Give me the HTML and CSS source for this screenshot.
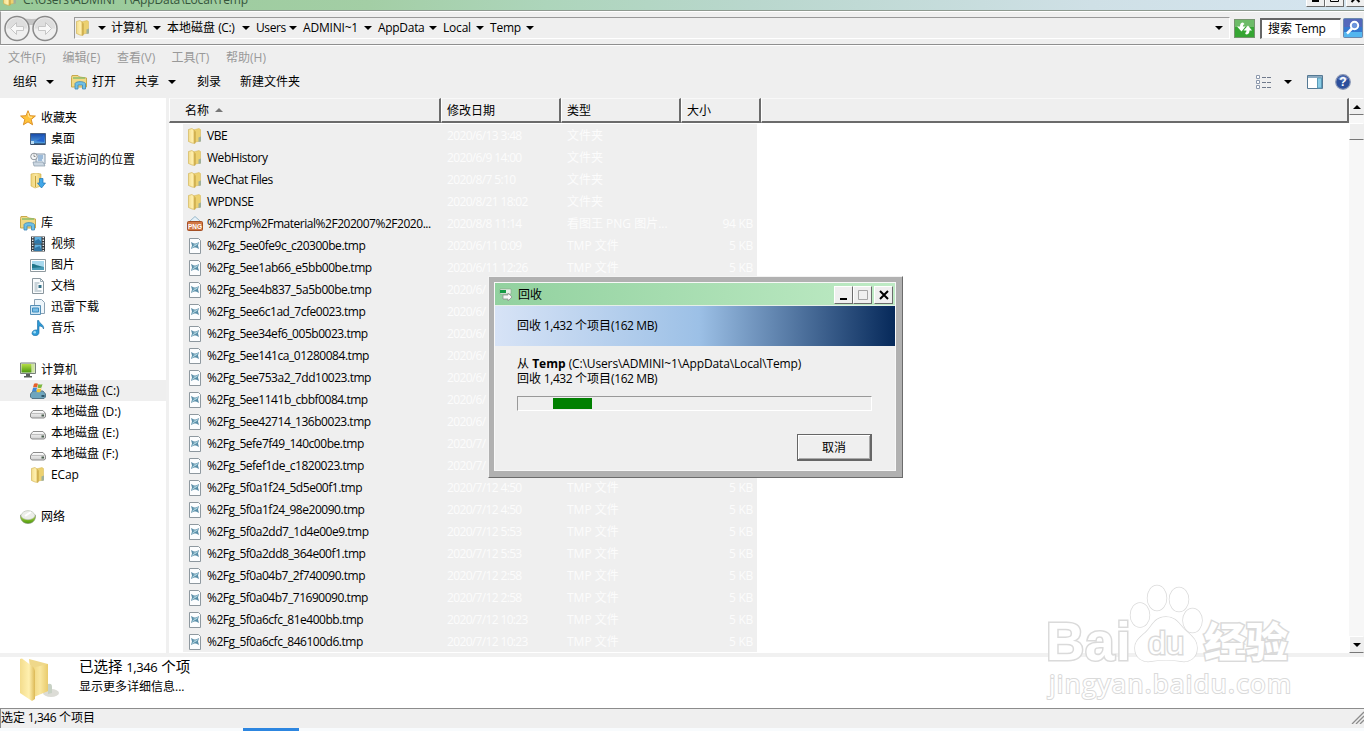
FILE: index.html
```html
<!DOCTYPE html>
<html lang="zh-CN">
<head>
    <meta charset="UTF-8">
    <title>C:\Users\ADMINI~1\AppData\Local\Temp</title>
    <link rel="stylesheet" href="styles.css">
</head>
<body>

<!-- shared icons -->
<svg class="defs" width="0" height="0">
    <defs>
        <linearGradient id="gold"><stop offset="0" stop-color="#f3dc8c"/><stop offset=".6" stop-color="#fff0b0"/><stop offset="1" stop-color="#dcb956"/></linearGradient>
        <linearGradient id="cream"><stop offset="0" stop-color="#f0d57c"/><stop offset=".5" stop-color="#f9e7a0"/><stop offset="1" stop-color="#e9cb6c"/></linearGradient>
        <linearGradient id="blue" x2="0" y2="1"><stop offset="0" stop-color="#1647a6"/><stop offset="1" stop-color="#58a9e8"/></linearGradient>
        <linearGradient id="silver" x2="0" y2="1"><stop offset="0" stop-color="#fff"/><stop offset="1" stop-color="#cfcfcf"/></linearGradient>
        <linearGradient id="green" x2="0" y2="1"><stop offset="0" stop-color="#b6dd45"/><stop offset="1" stop-color="#4c9a0c"/></linearGradient>
    </defs>
    <symbol id="folder" viewBox="0 0 16 16">
        <path d="M6 2l6-1.500 1.500 1V13L6 14.500z" fill="#ecd170" stroke="#d5b552" stroke-width=".5"/>
        <path d="M1.500 1.500L5 .5l3 2.500v12.500L5 15l-3.500-1.500z" fill="url(#gold)" stroke="#cfae4c" stroke-width=".6"/>
        <path d="M8 3.500v11.500" stroke="#bd9a39" stroke-width=".7"/>
        <path d="M11.500 9.500l2.500-1v5l-2.500.5z" fill="#9fb09a"/>
    </symbol>
    <symbol id="library" viewBox="0 0 16 16">
        <path d="M.5 3.500V13h15V4l-7-1L7 1.500H1z" fill="#f2d984" stroke="#c9a94c"/>
        <path d="M2 4h12" stroke="#8cbc6c" stroke-width="1.500"/>
        <path d="M4 15V9.500C5 7 13 7 14.500 9.500V15h-3v-4H7v4z" fill="#6fc0e6" stroke="#3f87b4" stroke-width=".8"/>
    </symbol>
    <symbol id="star" viewBox="0 0 16 16">
        <path d="M8 .7l2 5 5.400.3-4.200 3.500 1.400 5.300L8 11.900l-4.600 2.900 1.400-5.300L.6 6 6 5.700z" fill="#ffc33c" stroke="#d98a1e" stroke-width=".9"/>
        <path d="M8 3l1 4 3 .3" fill="none" stroke="#ffe9a0"/>
    </symbol>
    <symbol id="desktop" viewBox="0 0 16 16">
        <path d="M.5 2.500h15v11H.5z" fill="url(#blue)" stroke="#4a6080"/>
        <path d="M6 10c3-1 5-3 8-6v7z" fill="#2465cf"/>
        <path d="M1 13h14" stroke="#2b3c56" stroke-width="1.200"/>
        <path d="M1 10h3v3H1z" fill="#b9dcf4"/>
    </symbol>
    <symbol id="recent" viewBox="0 0 16 16">
        <path d="M6 2h9v10H6z" fill="#e3edf6" stroke="#8898a8"/>
        <path d="M3 10h10l2 4H4z" fill="#cbd7e2" stroke="#8898a8" stroke-width=".7"/>
        <path d="M8 4h5M8 6h5M8 8h4" stroke="#5689bd"/>
        <circle cx="4" cy="4.500" r="3.300" fill="#f5f7f8" stroke="#8f969c"/>
        <path d="M4 2.500v2h1.500" fill="none" stroke="#666" stroke-width=".7"/>
    </symbol>
    <symbol id="download" viewBox="0 0 16 16">
        <path d="M1 1l5-1 5 1v12l-6 2-4-2z" fill="url(#cream)" stroke="#cfac45" stroke-width=".6"/>
        <path d="M5.500 3v11" stroke="#c5a33d"/>
        <path d="M9.500 5.500h3.500V10h2.500l-4 5-4-5h2z" fill="#42a7e8" stroke="#1c75b5" stroke-width=".7"/>
    </symbol>
    <symbol id="video" viewBox="0 0 16 16">
        <path d="M1 .5h14v15H1z" fill="#33383d"/>
        <path d="M4.500 1h7v6.500h-7zM4.500 8.500h7V15h-7z" fill="#5fb0e0"/>
        <path d="M4.500 5l4-2 3 3v1.500h-7zM4.500 12l5-2 2 4v1h-7z" fill="#2f77a8"/>
        <path d="M2.700 1v14M13.300 1v14" stroke="#edf0f2" stroke-width="1.500" stroke-dasharray="1.300 1.300"/>
    </symbol>
    <symbol id="picture" viewBox="0 0 16 16">
        <path d="M.5 2.500h15v12H.5z" fill="#fff" stroke="#909a9f"/>
        <path d="M2 4h12v9H2z" fill="#a8d9ee"/>
        <path d="M2 7c4 0 5 2 12 3v3H2z" fill="#20768a"/>
        <path d="M2 11l12-1v3H2z" fill="#4b9db9"/>
    </symbol>
    <symbol id="document" viewBox="0 0 16 16">
        <path d="M2.500.5h8l3 3v12h-11z" fill="#fafcfd" stroke="#8b979e"/>
        <path d="M10.500.5v3h3M4.500 5h5M4.500 7h3M4.500 9h3M4.500 11h3M4.500 13h7" fill="none" stroke="#97aab5"/>
        <path d="M8.500 7h3v3h-3z" fill="#347086"/>
    </symbol>
    <symbol id="thunder" viewBox="0 0 16 16">
        <path d="M4.500.5h7l3 3v11h-10z" fill="#eef6fb" stroke="#8ba2b4"/>
        <path d="M.5 6.500h10v9H.5z" fill="#cfe7f5" stroke="#568fb6"/>
        <path d="M2.500 9h6v4h-6z" fill="#79bde6" stroke="#3e8dbf"/>
    </symbol>
    <symbol id="music" viewBox="0 0 16 16">
        <path d="M7.500.5h1.300c.6 3.500 5.700 4 4.700 8.500-.5-2-2-3-4.500-3v6.500c0 4-7 4.200-7 .8C2 10.500 5 9.500 7.500 10z" fill="#2c9ad6" stroke="#1769a2" stroke-width=".6"/>
        <circle cx="4.700" cy="12.300" r="1.300" fill="#9edbf5"/>
    </symbol>
    <symbol id="computer" viewBox="0 0 16 16">
        <path d="M.5 1h15v10.500H.5z" fill="#e2e8dd" stroke="#78817a"/>
        <path d="M1.500 2h10v8.500h-10z" fill="url(#green)"/>
        <path d="M12 2h2.500v8.500H12z" fill="#cce59c"/>
        <path d="M6 12h4v2h2v1.500H4V14h2z" fill="#59605a"/>
    </symbol>
    <symbol id="drive" viewBox="0 0 16 16">
        <path d="M.5 9.500L3 6.500h10l2.500 3V13l-1.500 1H2L.5 13z" fill="url(#silver)" stroke="#8c8c8c"/>
        <path d="M1 9.500h14" stroke="#aaa" stroke-width=".7"/>
        <path d="M11.500 10.500h2.500v2h-2.500z" fill="#4b5f4e"/>
    </symbol>
    <symbol id="sysdrive" viewBox="0 0 16 16">
        <path d="M.5 11L3 8h10l2.500 3v3l-1.500 1.500H2L.5 14z" fill="#6ea5bd" stroke="#577789"/>
        <path d="M11.500 12h3v2h-3z" fill="#30576b"/>
        <path d="M4 .7q2-1 4 0L7 4.500q-2-1-4 0z" fill="#e4602a"/>
        <path d="M8.500 1q2 1 4 0l-1 3.500q-2 1-4 0z" fill="#7cb840"/>
        <path d="M3 5q2-1 4 0L6 8.500q-2-1-4 0z" fill="#3f88d8"/>
        <path d="M7.500 5.300q2 1 4 0l-1 3.500q-2 1-4 0z" fill="#f3c431"/>
    </symbol>
    <symbol id="network" viewBox="0 0 16 16">
        <path d="M.5 6C2 9 14 9 15.500 6c.5 5-3 8.500-7.500 8.500S0 11 .5 6z" fill="url(#green)" stroke="#819173" stroke-width=".7"/>
        <path d="M1 6.500C3 0 13 0 15 6.500 14 12 2 12 1 6.500z" fill="#eceee9" stroke="#b9c2b3" stroke-width=".7"/>
        <path d="M5 7l6-4" stroke="#fff" stroke-width="2"/>
    </symbol>
    <symbol id="png" viewBox="0 0 16 16">
        <path d="M3 5L8 .5l5 4.500v3H3z" fill="#e5f1f8" stroke="#9ab8ca"/>
        <rect x=".5" y="5.500" width="15" height="9" rx="1" fill="#d17846" stroke="#a54f24"/>
        <text x="8" y="13" font-family="Liberation Sans, sans-serif" font-size="8" font-weight="bold" fill="#fff" text-anchor="middle" textLength="14" lengthAdjust="spacingAndGlyphs">PNG</text>
    </symbol>
    <symbol id="tmp" viewBox="0 0 16 16">
        <path d="M2.500.5h9l2 2v13h-11z" fill="#fcfdfe" stroke="#8e989f"/>
        <path d="M4 4l3 1.500h2L12 4l-1 3.500 1 3.500-3-1.500H7L4 11l1-3.500z" fill="#5a8ea8"/>
        <path d="M6.500 7h3M5 9.500l6-4" stroke="#c2e4ee" stroke-width=".8"/>
    </symbol>
</svg>

<div class="titlebar">
    <div class="title-left">
        <svg class="icon"><use href="#folder"/></svg>
        <span class="title-text">C:\Users\ADMINI~1\AppData\Local\Temp</span>
    </div>
    <div class="win-buttons">
        <span class="win-btn"><svg width="14" height="12" viewBox="0 0 14 12"><path d="M3 9h7" stroke="#000" stroke-width="2"/></svg></span>
        <span class="win-btn"><svg width="14" height="12" viewBox="0 0 14 12"><path d="M2.500 1.500h8v8h-8z" fill="none" stroke="#000"/></svg></span>
        <span class="win-btn close"><svg width="14" height="12" viewBox="0 0 14 12"><path d="M2.500 2l8 8M10.500 2l-8 8" stroke="#000" stroke-width="2"/></svg></span>
    </div>
</div>

<div class="addressbar">
    <svg class="nav-buttons" width="56" height="28" viewBox="0 0 56 28">
        <path d="M10 3q18 4 36 0v8H10z" fill="#c4c4c4"/>
        <circle cx="13" cy="14.500" r="12" fill="#efefef" stroke="#8a8a8a" stroke-width="1.500"/>
        <circle cx="41" cy="14.500" r="12" fill="#efefef" stroke="#8a8a8a" stroke-width="1.500"/>
        <path d="M2.500 14.500a10.500 10.500 0 0 1 21 0zM30.500 14.500a10.500 10.500 0 0 1 21 0z" fill="#dedede"/>
        <path d="M6.500 14.500l6-6v4h7v4h-7v4zM47.500 14.500l-6-6v4h-7v4h7v4z" fill="#f8f8f8" stroke="#c6c6c6"/>
    </svg>
    <div class="path">
        <svg class="icon"><use href="#folder"/></svg>
        <i class="arrow"></i><span class="c1">计算机</span>
        <i class="arrow"></i><span class="c2">本地磁盘 <b>(C:)</b></span>
        <i class="arrow"></i><span class="c3">Users</span>
        <i class="arrow"></i><span class="c4">ADMINI~1</span>
        <i class="arrow"></i><span class="c5">AppData</span>
        <i class="arrow"></i><span class="c6">Local</span>
        <i class="arrow"></i><span class="c7">Temp</span>
        <i class="arrow"></i>
        <i class="arrow last"></i>
    </div>
    <svg class="refresh" width="21" height="19" viewBox="0 0 21 19">
        <rect x=".5" y=".5" width="20" height="18" fill="#35a532" stroke="#76946f"/>
        <path d="M1 1h19v7H1z" fill="#6dbb68"/>
        <path d="M9 3.500q-3 0-3 4H3l4.500 5 4-5H8.800q0-2 1.700-2.500zM12 15.500q3.500 0 3.500-4H18l-4-5-4.500 5h3q0 2-1.500 2.500z" fill="#fff"/>
    </svg>
    <div class="search">搜索 <b>Temp</b></div>
    <svg class="search-btn" width="20" height="20" viewBox="0 0 20 20">
        <rect x=".5" y=".5" width="19" height="19" rx="1" fill="#3478d0" stroke="#6b88ad"/>
        <path d="M1 1h18v8H1z" fill="#5367ba"/>
        <path d="M1 14h18v5H1z" fill="#54b6ef"/>
        <circle cx="11.500" cy="7.500" r="3.700" fill="#6c94dc" stroke="#fff" stroke-width="2"/>
        <path d="M9 10.500l-5 5" stroke="#fff" stroke-width="2.500"/>
    </svg>
</div>

<div class="menubar">
    <span>文件(F)</span><span>编辑(E)</span><span>查看(V)</span><span>工具(T)</span><span>帮助(H)</span>
</div>

<div class="toolbar">
    <span class="t-org">组织</span><i class="arrow"></i>
    <svg class="icon"><use href="#library"/></svg><span class="t-open">打开</span>
    <span class="t-share">共享</span><i class="arrow"></i>
    <span class="t-burn">刻录</span>
    <span>新建文件夹</span>
    <div class="toolbar-right">
        <svg width="16" height="14" viewBox="0 0 16 14">
            <path d="M.5.5h3v3h-3zM.5 5.500h3v3h-3zM.5 10.500h3v3h-3z" fill="#fff" stroke="#8c98ac"/>
            <path d="M6 2.500h4m1 0h4M6 7.500h4m1 0h4M6 12.500h4m1 0h4" stroke="#707a8c"/>
        </svg>
        <i class="arrow"></i>
        <svg class="pane" width="16" height="14" viewBox="0 0 16 14">
            <path d="M.5.5h15v13H.5z" fill="#fff" stroke="#557994"/>
            <path d="M1 2h14" stroke="#8caac0" stroke-width="2"/>
            <path d="M10.500 3h4v10h-4z" fill="#8bcce5" stroke="#5b9bb8"/>
        </svg>
        <svg width="16" height="16" viewBox="0 0 16 16">
            <circle cx="8" cy="8" r="7.300" fill="#2d4f9c" stroke="#8b98b6" stroke-width="1.200"/>
            <path d="M3 5a6 6 0 0 1 10 0q-5 3-10 0z" fill="#6f8cc9"/>
            <text x="8" y="12.200" font-family="Liberation Sans, sans-serif" font-size="12" font-weight="bold" fill="#fff" text-anchor="middle">?</text>
        </svg>
    </div>
</div>

<div class="main">
    <div class="sidebar">
        <div class="item top"><svg class="icon"><use href="#star"/></svg>收藏夹</div>
        <div class="item"><svg class="icon"><use href="#desktop"/></svg>桌面</div>
        <div class="item"><svg class="icon"><use href="#recent"/></svg>最近访问的位置</div>
        <div class="item"><svg class="icon"><use href="#download"/></svg>下载</div>

        <div class="item top group"><svg class="icon"><use href="#library"/></svg>库</div>
        <div class="item"><svg class="icon"><use href="#video"/></svg>视频</div>
        <div class="item"><svg class="icon"><use href="#picture"/></svg>图片</div>
        <div class="item"><svg class="icon"><use href="#document"/></svg>文档</div>
        <div class="item"><svg class="icon"><use href="#thunder"/></svg>迅雷下载</div>
        <div class="item"><svg class="icon"><use href="#music"/></svg>音乐</div>

        <div class="item top group"><svg class="icon"><use href="#computer"/></svg>计算机</div>
        <div class="item selected"><svg class="icon"><use href="#sysdrive"/></svg>本地磁盘&nbsp;<b>(C:)</b></div>
        <div class="item"><svg class="icon"><use href="#drive"/></svg>本地磁盘&nbsp;<b>(D:)</b></div>
        <div class="item"><svg class="icon"><use href="#drive"/></svg>本地磁盘&nbsp;<b>(E:)</b></div>
        <div class="item"><svg class="icon"><use href="#drive"/></svg>本地磁盘&nbsp;<b>(F:)</b></div>
        <div class="item"><svg class="icon"><use href="#folder"/></svg><b>ECap</b></div>

        <div class="item top group"><svg class="icon"><use href="#network"/></svg>网络</div>
    </div>

    <div class="content">
        <div class="columns">
            <div class="col name">名称<i class="sort"></i></div>
            <div class="col">修改日期</div>
            <div class="col">类型</div>
            <div class="col size">大小</div>
            <div class="col rest"></div>
        </div>
        <div class="files" id="files"></div>
    </div>

    <div class="scrollbar">
        <span class="sb-btn"><i class="up"></i></span>
        <span class="sb-thumb"></span>
        <span class="sb-btn bottom"><i class="down"></i></span>
    </div>
</div>

<div class="details">
    <svg class="big-folder" width="42" height="44" viewBox="0 0 42 44">
        <ellipse cx="32" cy="35" rx="8" ry="4" fill="#dcdcd6"/>
        <path d="M10 1l19 5v27L14 38z" fill="#efd88a"/>
        <path d="M13 10l16-4v27l-14 6z" fill="url(#cream)"/>
        <path d="M1 1l2-.5L13 8q3 2 3 5v28l-3 2L1 35z" fill="url(#gold)"/>
        <path d="M29 26q4-1 4 3v6l-4 1z" fill="#c7d1c4"/>
    </svg>
    <div class="details-text">
        <div class="selected-count">已选择 <b>1,346</b> 个项</div>
        <div>显示更多详细信息...</div>
    </div>
</div>

<div class="statusbar">
    <span>选定<b> 1,346 </b>个项目</span>
    <svg width="13" height="13" viewBox="0 0 13 13"><path d="M1 13L13 1M5 13l8-8M9 13l4-4" stroke="#8c8c8c" stroke-width="1.300"/></svg>
</div>
<div class="taskbar"><span></span></div>

<!-- delete progress dialog -->
<div class="dialog">
    <div class="dialog-inner">
        <div class="dialog-title">
            <svg width="14" height="14" viewBox="0 0 14 14">
                <path d="M1 1h11v5H1z" fill="#e8f2e8" stroke="#8aa38c" stroke-width=".6"/>
                <path d="M1 2h6v3H1z" fill="#169b45"/>
                <path d="M4 7h5V5l4 4-4 4v-2H4z" fill="#f6f6f6" stroke="#8f8f8f" stroke-width=".8"/>
            </svg>
            <span>回收</span>
            <div class="win-buttons">
                <span class="win-btn"><svg width="14" height="14" viewBox="0 0 14 14"><path d="M3 11h7" stroke="#000" stroke-width="2"/></svg></span>
                <span class="win-btn"><svg width="14" height="14" viewBox="0 0 14 14"><path d="M2.500 2.500h9v9h-9z" fill="none" stroke="#a5a5a5"/></svg></span>
                <span class="win-btn close"><svg width="14" height="14" viewBox="0 0 14 14"><path d="M3 3l8 8M11 3l-8 8" stroke="#000" stroke-width="2"/></svg></span>
            </div>
        </div>
        <div class="banner">回收<b> 1,432 </b>个项目<b>(162 MB)</b></div>
        <div class="dialog-body">
            <div class="line">从 <strong>Temp</strong> <b class="from">(C:\Users\ADMINI~1\AppData\Local\Temp)</b></div>
            <div class="line">回收<b> 1,432 </b>个项目<b>(162 MB)</b></div>
            <div class="progress"><span></span></div>
            <button type="button">取消</button>
        </div>
    </div>
</div>

<!-- watermark -->
<svg class="watermark" width="260" height="140" viewBox="0 0 260 140">
    <g fill="#fff" stroke="#dadada" stroke-width="1.500" paint-order="stroke">
        <ellipse cx="100" cy="45" rx="9.500" ry="12"/>
        <ellipse cx="117" cy="28" rx="9.500" ry="12.500"/>
        <ellipse cx="139" cy="29.500" rx="9.500" ry="12"/>
        <ellipse cx="152.500" cy="50.500" rx="9.500" ry="12"/>
        <path d="M126 47c10 0 13 7 18 12 6 6 13 10 13 19 0 10-8 15-17 13-9-1.500-19-1.500-28 0-9 2-17-3-17-13 0-9 8-12 13-18 5-6 8-13 18-13z"/>
        <g stroke-width="3" font-family="Liberation Sans, sans-serif" font-weight="bold">
            <text x="6" y="90" font-size="53">B</text>
            <text x="45" y="90" font-size="53">a</text>
            <text x="76" y="90" font-size="53">i</text>
            <text x="164" y="87" font-family="Noto Sans CJK SC, sans-serif" font-weight="900" font-size="41" textLength="84" lengthAdjust="spacingAndGlyphs">经验</text>
        </g>
        <text x="108" y="84" stroke-width="3" font-family="Liberation Sans, sans-serif" font-size="32" textLength="36" lengthAdjust="spacingAndGlyphs">du</text>
        <text x="9" y="123" stroke-width="2" font-family="Open Sans, sans-serif" font-size="26" textLength="242" lengthAdjust="spacing">jingyan.baidu.com</text>
    </g>
</svg>

<script>
    const files = [
        ['folder', 'VBE', '2020/6/13 3:48', '文件夹', ''],
        ['folder', 'WebHistory', '2020/6/9 14:00', '文件夹', ''],
        ['folder', 'WeChat Files', '2020/8/7 5:10', '文件夹', ''],
        ['folder', 'WPDNSE', '2020/8/21 18:02', '文件夹', ''],
        ['png', '%2Fcmp%2Fmaterial%2F202007%2F2020...', '2020/8/8 11:14', '看图王 PNG 图片...', '94 KB'],
        ['tmp', '%2Fg_5ee0fe9c_c20300be.tmp', '2020/6/11 0:09', 'TMP 文件', '5 KB'],
        ['tmp', '%2Fg_5ee1ab66_e5bb00be.tmp', '2020/6/11 12:26', 'TMP 文件', '5 KB'],
        ['tmp', '%2Fg_5ee4b837_5a5b00be.tmp', '2020/6/', '', ''],
        ['tmp', '%2Fg_5ee6c1ad_7cfe0023.tmp', '2020/6/', '', ''],
        ['tmp', '%2Fg_5ee34ef6_005b0023.tmp', '2020/6/', '', ''],
        ['tmp', '%2Fg_5ee141ca_01280084.tmp', '2020/6/', '', ''],
        ['tmp', '%2Fg_5ee753a2_7dd10023.tmp', '2020/6/', '', ''],
        ['tmp', '%2Fg_5ee1141b_cbbf0084.tmp', '2020/6/', '', ''],
        ['tmp', '%2Fg_5ee42714_136b0023.tmp', '2020/6/', '', ''],
        ['tmp', '%2Fg_5efe7f49_140c00be.tmp', '2020/7/', '', ''],
        ['tmp', '%2Fg_5efef1de_c1820023.tmp', '2020/7/', '', ''],
        ['tmp', '%2Fg_5f0a1f24_5d5e00f1.tmp', '2020/7/12 4:50', 'TMP 文件', '5 KB'],
        ['tmp', '%2Fg_5f0a1f24_98e20090.tmp', '2020/7/12 4:50', 'TMP 文件', '5 KB'],
        ['tmp', '%2Fg_5f0a2dd7_1d4e00e9.tmp', '2020/7/12 5:53', 'TMP 文件', '5 KB'],
        ['tmp', '%2Fg_5f0a2dd8_364e00f1.tmp', '2020/7/12 5:53', 'TMP 文件', '5 KB'],
        ['tmp', '%2Fg_5f0a04b7_2f740090.tmp', '2020/7/12 2:58', 'TMP 文件', '5 KB'],
        ['tmp', '%2Fg_5f0a04b7_71690090.tmp', '2020/7/12 2:58', 'TMP 文件', '5 KB'],
        ['tmp', '%2Fg_5f0a6cfc_81e400bb.tmp', '2020/7/12 10:23', 'TMP 文件', '5 KB'],
        ['tmp', '%2Fg_5f0a6cfc_846100d6.tmp', '2020/7/12 10:23', 'TMP 文件', '5 KB']
    ];

    document.getElementById('files').innerHTML = files.map(([icon, name, date, type, size]) => `
        <div class="row">
            <svg class="icon"><use href="#${icon}"/></svg>
            <span class="f-name">${name}</span>
            <span class="f-date">${date}</span>
            <span class="f-type">${type}</span>
            <span class="f-size">${size}</span>
        </div>
    `).join('');
</script>

</body>
</html>
```

FILE: styles.css
```css
* {
    box-sizing: border-box;
}
body {
    margin: 0;
    width: 1364px;
    height: 731px;
    overflow: hidden;
    display: flex;
    flex-direction: column;
    background-color: #efefef;
    color: #000;
    font-family: "Open Sans", "Noto Sans CJK SC", sans-serif;
    font-size: 12px;
    line-height: 16px;
    white-space: nowrap;
}
b {
    font-weight: normal;
    letter-spacing: -0.4px;
}
.defs {
    position: absolute;
}
.icon {
    width: 16px;
    height: 16px;
    flex: none;
}
.arrow {
    flex: none;
    width: 0;
    border: 4px solid transparent;
    border-top-color: #000;
    border-bottom: 0;
}

/* title bar */
.titlebar {
    height: 11px;
    flex: none;
    display: flex;
    justify-content: space-between;
    align-items: flex-end;
    overflow: hidden;
    border-bottom: 1px solid #8e9a90;
    background: linear-gradient(to right, #98ca98, #a3cea5 27%, #add5bb 40%, #b9d7cd 55%, #cfe0e6 80%, #d5e5f0);
}
.title-left {
    display: flex;
    align-items: flex-end;
    padding-left: 2px;
}
.title-left .icon {
    margin-bottom: 4px;
}
.title-text {
    margin: 0 0 2px 5px;
    color: #35543b;
    letter-spacing: -0.15px;
}
.win-buttons {
    display: flex;
    margin-left: auto;
}
.win-btn {
    width: 19px;
    height: 18px;
    display: flex;
    justify-content: center;
    align-items: center;
    background-color: #efefef;
    border: 1px solid;
    border-color: #fff #6b6b6b #6b6b6b #fff;
}
.win-btn.close {
    margin-left: 2px;
}
.titlebar .win-buttons {
    margin: 0 -1px 3px 0;
}

/* address bar */
.addressbar {
    height: 34px;
    flex: none;
    display: flex;
    align-items: center;
    padding-left: 3px;
    border-top: 1px solid #fff;
    border-bottom: 1px solid #8f8f8f;
    border-left: 1px solid #999;
}
.path {
    width: 1156px;
    height: 22px;
    margin-left: 14px;
    padding-bottom: 1px;
    display: flex;
    align-items: center;
    border: 1px solid;
    border-color: #999 #fff #fff #999;
}
.path .arrow {
    margin: 0 6px 0 5px;
}
.path .icon + .arrow {
    margin: 0 5px 0 7px;
}
.path .c1 { width: 37px; }
.path .c2 { width: 70px; }
.path .c3 { width: 28px; letter-spacing: -0.4px; }
.path .c4 { width: 56px; letter-spacing: -0.2px; }
.path .c5 { width: 46px; letter-spacing: -0.3px; }
.path .c6 { width: 28px; letter-spacing: -0.2px; }
.path .c7 { width: 31px; letter-spacing: -0.2px; }
.path .arrow.last {
    margin-left: auto;
    margin-right: 6px;
}
.refresh {
    margin: 0 5px 0 4px;
}
.search {
    width: 81px;
    height: 21px;
    padding-left: 6px;
    line-height: 17px;
    background-color: #fff;
    border: 1px solid;
    border-width: 2px 1px 1px 2px;
    border-color: #666 #eee #eee #666;
}
.search-btn {
    flex: none;
    margin-left: 2px;
}

/* menu + command bar */
.menubar {
    height: 23px;
    flex: none;
    display: flex;
    align-items: center;
    padding: 1px 0 0 8px;
    border-top: 1px solid #fff;
    color: #999;
}
.menubar span {
    width: 54.500px;
}
.toolbar {
    height: 30px;
    flex: none;
    display: flex;
    align-items: center;
    padding: 0 13px 3px;
}
.toolbar .t-org { width: 33px; }
.toolbar .icon { margin: 0 5px 0 17px; }
.toolbar .t-open { width: 43px; }
.toolbar .t-share { width: 33px; }
.toolbar .t-burn { margin-left: 21px; width: 43px; }
.toolbar-right {
    margin-left: auto;
    display: flex;
    align-items: center;
}
.toolbar-right .arrow { margin: 0 15px 0 12px; }
.toolbar-right .pane { margin-right: 12px; }

/* sidebar */
.main {
    height: 555px;
    flex: none;
    display: flex;
    background-color: #fff;
}
.sidebar {
    width: 169px;
    flex: none;
    padding-top: 9px;
    border-right: 3px solid #f0f0f0;
}
.item {
    height: 21px;
    display: flex;
    align-items: center;
    padding-left: 30px;
}
.item .icon {
    margin-right: 5px;
}
.item b {
    letter-spacing: -0.1px;
}
.item.top {
    padding-left: 20px;
}
.item.group {
    margin-top: 21px;
}
.item.selected {
    background-color: #efefef;
}

/* file list */
.content {
    flex: 1;
}
.columns {
    height: 26px;
    display: flex;
    padding-bottom: 1px;
}
.col {
    width: 120px;
    padding: 4px 0 0 5px;
    background-color: #efefef;
    border: 1px solid;
    border-color: #f8f8f8 #6b6b6b #6b6b6b #fff;
    border-bottom-width: 2px;
    border-right-width: 2px;
}
.col.name {
    width: 272px;
    padding-left: 15px;
}
.col.size {
    width: 80px;
}
.col.rest {
    flex: 1;
}
.sort {
    display: inline-block;
    margin: 0 0 3px 6px;
    border: 4px solid transparent;
    border-bottom-color: #777;
    border-top: 0;
}
.files {
    width: 574px;
    margin-left: 14px;
}
.row {
    height: 22px;
    display: flex;
    align-items: center;
    padding: 2px 0 0 4px;
    background-color: #efefef;
}
.row .icon {
    margin-bottom: 1px;
}
.f-name {
    width: 240px;
    margin-left: 4px;
    letter-spacing: -0.47px;
}
.f-date,
.f-type,
.f-size {
    width: 120px;
    color: #fcfcfc;
}
.f-date {
    letter-spacing: -0.65px;
}
.f-size {
    width: 66px;
    text-align: right;
    letter-spacing: -0.3px;
}

/* scrollbar */
.scrollbar {
    width: 15px;
    flex: none;
    display: flex;
    flex-direction: column;
    background-color: #f7f7f7;
}
.sb-btn,
.sb-thumb {
    height: 17px;
    display: flex;
    justify-content: center;
    align-items: center;
    background-color: #efefef;
    border: 1px solid;
    border-color: #fff #efefef #777 #fff;
}
.sb-thumb {
    margin-top: 8px;
}
.sb-btn.bottom {
    margin-top: auto;
}
.up,
.down {
    border: 4px solid transparent;
    border-bottom-color: #000;
    border-top: 0;
}
.down {
    border-top: 4px solid #000;
    border-bottom: 0;
}

/* details pane, status bar */
.details {
    height: 55px;
    flex: none;
    display: flex;
    background-color: #fff;
    border-top: 4px solid #f1f1f1;
}
.big-folder {
    margin: 1px 18px 0 19px;
}
.details-text {
    line-height: 19px;
}
.selected-count {
    font-size: 14.500px;
}
.selected-count b {
    font-size: 13px;
}
.statusbar {
    height: 20px;
    flex: none;
    display: flex;
    justify-content: space-between;
    align-items: center;
    padding: 0 0 2px;
    border-top: 1px solid #8c8c8c;
    border-left: 1px solid #8c8c8c;
}
.taskbar {
    height: 3px;
    flex: none;
    background-color: #f8fbfd;
}
.taskbar span {
    display: block;
    width: 56px;
    height: 3px;
    margin-left: 243px;
    background-color: #2d86e0;
}

/* dialog */
.dialog {
    position: absolute;
    left: 488px;
    top: 276px;
    width: 415px;
    height: 202px;
    padding: 5px 6px 6px 5px;
    background-color: #b1b1b1;
    border: 1px solid;
    border-color: #f3f3f3 #6c6c6c #6c6c6c #f3f3f3;
}
.dialog-inner {
    height: 100%;
    background-color: #efefef;
    border: 1px solid #f8f8f8;
}
.dialog-title {
    height: 22px;
    display: flex;
    align-items: center;
    padding: 1px 2px 0 4px;
    background: linear-gradient(to right, #92d19f, #bfebc5);
}
.dialog-title > span {
    margin-left: 5px;
}
.banner {
    height: 41px;
    padding-left: 22px;
    line-height: 40px;
    border-top: 1px solid #e5efe8;
    background: linear-gradient(to right, #d7e3f6, #9cc0e6 51%, #06295a);
}
.dialog-body {
    padding: 10px 23px 0 22px;
}
.line {
    height: 15px;
    line-height: 15px;
}
.from {
    letter-spacing: -0.13px;
}
.progress {
    height: 15px;
    margin-top: 10px;
    padding: 1px 0 0 35px;
    border: 1px solid;
    border-color: #999 #fff #fff #999;
}
.progress span {
    display: block;
    width: 39px;
    height: 11px;
    background-color: #008000;
}
.dialog-body button {
    display: block;
    width: 75px;
    height: 27px;
    margin: 23px 0 0 auto;
    padding: 1px 0 0;
    font: inherit;
    background-color: #efefef;
    border: 1px solid #666;
    border-width: 1px 2px 2px 1px;
    box-shadow: inset 1px 1px #fff, inset -1px -1px #aaa;
}

.watermark {
    position: absolute;
    left: 1040px;
    top: 570px;
}
```
